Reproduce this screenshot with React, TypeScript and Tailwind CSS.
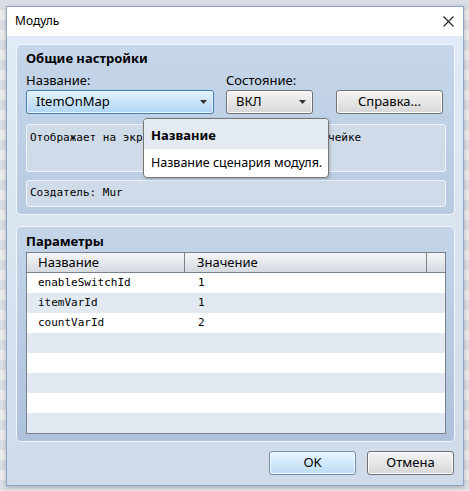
const ui = "font-['Noto_Sans',sans-serif]";
const mono = "font-['DejaVu_Sans_Mono',monospace]";

const params: [string, string][] = [
  ['enableSwitchId', '1'],
  ['itemVarId', '1'],
  ['countVarId', '2'],
  ['', ''],
  ['', ''],
  ['', ''],
  ['', ''],
  ['', ''],
];

const Arrow = () => (
  <svg width="7" height="4" viewBox="0 0 7 4">
    <path d="M0 0h7L3.5 4z" fill="#333" />
  </svg>
);

const grayBtn =
  'h-[24px] rounded-[3px] border border-[#707070] bg-gradient-to-b from-[#f3f3f3] via-[#e6e6e6] to-[#d6d6d6] shadow-[inset_0_0_0_1px_#fbfbfb]';

const App = () => {
  return (
    <div
      className={`relative w-[469px] h-[491px] p-[6px] bg-[image:repeating-linear-gradient(180deg,#dadee4_0px,#dadee4_10px,#ebebeb_10px,#ebebeb_20px)] ${ui} text-[13px] text-black`}
    >
      {/* Window */}
      <div className="flex flex-col w-[458px] h-[480px] border border-[#8ea6c8] shadow-[0_1px_4px_rgba(0,0,0,0.25)]">
        {/* Title bar */}
        <div className="flex items-center justify-between h-[29px] bg-white pl-[8px] pr-[9px]">
          <span className="text-[12px] leading-none pb-[1px]">Модуль</span>
          <svg width="11" height="11" viewBox="0 0 11 11">
            <path d="M0.5 0.5l10 10M10.5 0.5l-10 10" stroke="#222" strokeWidth="1.1" />
          </svg>
        </div>

        {/* Body */}
        <div className="flex-1 flex flex-col bg-gradient-to-b from-[#e1ebf8] to-[#cfdbe9] pl-[9px] pr-[8px] pt-[8px]">
          {/* Общие настройки */}
          <div className="rounded-[5px] border border-[#f1f6fc] bg-gradient-to-b from-[#c5d6ea] to-[#b8cbe1] pl-[9px] pr-[8px] pt-[4px] pb-[7px]">
            <div className="font-bold leading-[18px]">Общие настройки</div>
            <div className="flex mt-[5px] leading-[16px]">
              <span className="w-[200px]">Название:</span>
              <span>Состояние:</span>
            </div>
            <div className="flex mt-[2px]">
              <div className="flex items-center justify-between w-[188px] h-[24px] rounded-[3px] border border-[#3c7fb1] bg-gradient-to-b from-[#e5f3fd] via-[#c9e4f9] to-[#b0d5f3] shadow-[inset_0_0_0_1px_#eaf6fe] pl-[9px] pr-[6px]">
                <span>ItemOnMap</span>
                <Arrow />
              </div>
              <div className={`flex items-center justify-between w-[87px] ml-[12px] pl-[9px] pr-[6px] ${grayBtn}`}>
                <span>ВКЛ</span>
                <Arrow />
              </div>
              <button className={`w-[107px] ml-[23px] ${grayBtn}`}>Справка...</button>
            </div>
            <div className={`mt-[10px] h-[48px] rounded-[3px] border border-[#eef3f9] bg-[#cfdbe8] pl-[3px] pt-[6px] ${mono} text-[11px] leading-[14px] whitespace-nowrap overflow-hidden`}>
              Отображает на экране количество предметов в ячейке
            </div>
            <div className={`flex items-center mt-[8px] h-[27px] rounded-[3px] border border-[#eef3f9] bg-[#cfdbe8] pl-[3px] ${mono} text-[11px]`}>
              Создатель: Mur
            </div>
          </div>

          {/* Параметры */}
          <div className="mt-[11px] rounded-[5px] border border-[#f1f6fc] bg-gradient-to-b from-[#c4d5e9] to-[#aec2db] pl-[9px] pr-[8px] pt-[5px] pb-[7px]">
            <div className="font-bold leading-[18px]">Параметры</div>
            <div className="mt-[2px] border border-[#77828f] bg-white">
              <div className="flex h-[20px] border-b border-[#77828f] bg-gradient-to-b from-[#f4f5f7] to-[#d5dae1] leading-[19px]">
                <div className="w-[158px] pl-[11px] border-r border-[#77828f]">Название</div>
                <div className="w-[242px] pl-[12px] border-r border-[#77828f]">Значение</div>
                <div className="flex-1" />
              </div>
              {params.map(([name, value], i) => (
                <div
                  key={i}
                  className={`flex h-[20px] items-center ${mono} text-[11px] ${i % 2 === 1 ? 'bg-[#e2e9f1]' : 'bg-white'}`}
                >
                  <span className="w-[159px] pl-[11px]">{name}</span>
                  <span className="pl-[12px]">{value}</span>
                </div>
              ))}
            </div>
          </div>

          {/* Buttons */}
          <div className="flex justify-end gap-[11px] mt-[9px] pr-[1px]">
            <button className="w-[87px] h-[24px] rounded-[3px] border border-[#6f8eaf] bg-gradient-to-b from-[#e9f4fd] via-[#d2e8fa] to-[#bcdcf6] shadow-[inset_0_0_0_1px_#f2f9ff]">
              OK
            </button>
            <button className={`w-[87px] ${grayBtn}`}>Отмена</button>
          </div>
        </div>
      </div>

      {/* Tooltip */}
      <div className="absolute left-[143px] top-[118px] w-[186px] h-[60px] rounded-[4px] border border-[#767676] bg-white overflow-hidden shadow-[1px_1px_3px_rgba(0,0,0,0.2)]">
        <div className="h-[30px] bg-[#e4eaf2] pl-[7px] pt-[7px] font-bold leading-[18px]">Название</div>
        <div className="pl-[7px] pt-[5px] leading-[18px] text-[12.5px] whitespace-nowrap">Название сценария модуля.</div>
      </div>
    </div>
  );
};

export default App;
